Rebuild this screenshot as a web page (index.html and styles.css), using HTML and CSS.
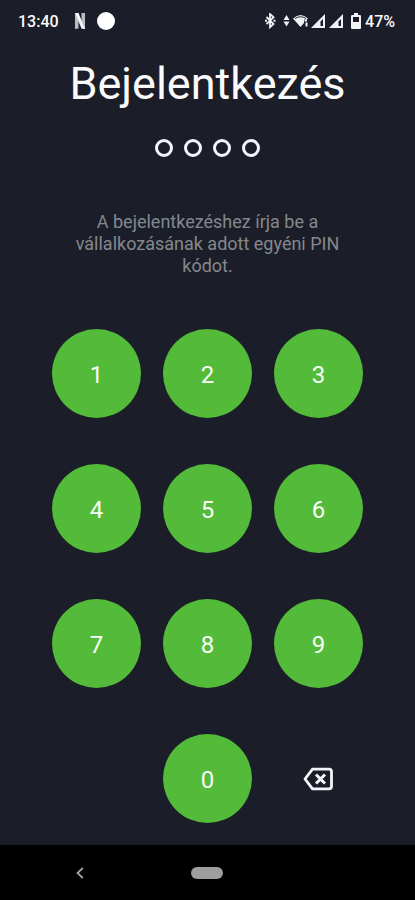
FILE: index.html
```html
<!DOCTYPE html>
<html lang="hu">
<head>
    <meta charset="UTF-8">
    <meta name="viewport" content="width=device-width, initial-scale=1.0">
    <title>Bejelentkezés</title>
    <link rel="stylesheet" href="styles.css">
</head>
<body>

<header class="status-bar">
    <div class="status-left">
        <span>13:40</span>
        <svg class="app-icon" width="10" height="16" viewBox="0 0 10 16">
            <path d="M0 0h3.500v15.500l-3.500 .5zM6.500 0H10v16l-3.500-.5z" fill="#b9bcc2"/>
            <path d="M0 0h3.500L10 16l-3.500-.5z" fill="#f4f5f7"/>
        </svg>
        <span class="notification-dot"></span>
    </div>
    <div class="status-right">
        <svg width="60" height="16" viewBox="0 0 60 16" fill="#f1f2f5">
            <!-- bluetooth -->
            <path d="M1.500 4l7 7L5 14.200V1l3.500 3.200-7 7" fill="none" stroke="#f1f2f5" stroke-width="1.800"/>
            <path d="M0 6.700h2v2H0zM8.500 6.700h2v2h-2z"/>
            <!-- adatforgalom -->
            <path d="M18.500 7l3-5 3 5zM18.500 8.500h6l-3 5z"/>
            <!-- wifi -->
            <path d="M28 5.500q7.500-7 15 0L35.500 14z"/>
            <path d="M30 5.500q5.500-3.500 11 0" fill="none" stroke="#1b1e28" stroke-width="1"/>
            <path d="M39 6.500h5V15h-5z" fill="#1b1e28"/>
            <path d="M39.500 6.500H42v2h-2.500zM40.500 9.500h2v4h-2z"/>
            <!-- térerő -->
            <path d="M46 15L60 1v14z"/>
            <path d="M55.500 8.500L58 6v7h-2.500z" fill="#1b1e28"/>
        </svg>
        <svg width="14" height="16" viewBox="0 0 14 16" fill="#f1f2f5">
            <path d="M0 15L14 1v14z"/>
            <path d="M9.500 8.500L12 6v7H9.500z" fill="#1b1e28"/>
        </svg>
        <svg class="battery" width="10" height="16" viewBox="0 0 10 16" fill="#f1f2f5">
            <path d="M3 0h4v2h2q1 0 1 1v12q0 1-1 1H1q-1 0-1-1V3q0-1 1-1h2z"/>
            <path d="M2 4h6v5H2z" fill="#1b1e28"/>
        </svg>
        <span>47%</span>
    </div>
</header>

<main class="login">
    <h1>Bejelentkezés</h1>
    <div class="pin-dots">
        <span class="dot"></span>
        <span class="dot"></span>
        <span class="dot"></span>
        <span class="dot"></span>
    </div>
    <p class="hint">A bejelentkezéshez írja be a vállalkozásának adott egyéni PIN kódot.</p>
    <div class="keypad">
        <button class="key" type="button">1</button>
        <button class="key" type="button">2</button>
        <button class="key" type="button">3</button>
        <button class="key" type="button">4</button>
        <button class="key" type="button">5</button>
        <button class="key" type="button">6</button>
        <button class="key" type="button">7</button>
        <button class="key" type="button">8</button>
        <button class="key" type="button">9</button>
        <button class="key key-zero" type="button">0</button>
        <button class="key key-delete" type="button" aria-label="Törlés">
            <svg width="32" height="24" viewBox="0 0 32 24" fill="none" stroke="#f4f5f8" stroke-width="2.800" stroke-linejoin="round">
                <path d="M9.500 2.200H26q2.500 0 2.500 2.500v14.600q0 2.500-2.500 2.500H9.500L2 12z"/>
                <path d="M13 7.500l9 9M22 7.500l-9 9" stroke-width="3"/>
            </svg>
        </button>
    </div>
</main>

<nav class="nav-bar">
    <button class="nav-button" type="button" aria-label="Vissza">
        <svg width="8" height="12" viewBox="0 0 8 12" fill="none" stroke="#a3a3a3" stroke-width="1.800">
            <path d="M6.800 1L1.500 6l5.300 5"/>
        </svg>
    </button>
    <button class="nav-button" type="button" aria-label="Kezdőképernyő">
        <span class="home-pill"></span>
    </button>
</nav>

</body>
</html>
```
FILE: styles.css
```css
* {
    box-sizing: border-box;
}

body {
    margin: 0;
    min-height: 100vh;
    display: flex;
    flex-direction: column;
    background-color: #1b1e28;
    color: #fafafc;
    font-family: Roboto, sans-serif;
}

/* Állapotsor */
.status-bar {
    display: flex;
    justify-content: space-between;
    align-items: center;
    height: 42px;
    padding: 0 20px 0 18px;
    font-size: 16px;
    font-weight: 500;
}

.status-left,
.status-right {
    display: flex;
    align-items: center;
}

.status-right {
    gap: 4px;
}

.app-icon {
    margin: 0 12px 0 16px;
}

.notification-dot {
    width: 18px;
    height: 18px;
    border-radius: 50%;
    background-color: #fff;
}

.battery {
    margin-left: 4px;
}

/* Bejelentkezés */
.login {
    flex: 1;
    display: flex;
    flex-direction: column;
    align-items: center;
    padding: 16px 52px 22px;
}

h1 {
    margin: 0;
    font-size: 45px;
    font-weight: 400;
    line-height: 52px;
}

.pin-dots {
    display: flex;
    gap: 11px;
    margin-top: 29px;
}

.dot {
    width: 18px;
    height: 18px;
    border: 3px solid #f4f5f8;
    border-radius: 50%;
}

.hint {
    max-width: 288px;
    margin: 54px 0 52px;
    color: #85878d;
    font-size: 18px;
    line-height: 22px;
    text-align: center;
}

.keypad {
    display: grid;
    grid-template-columns: repeat(3, 89px);
    gap: 46px 22px;
}

.key {
    display: flex;
    justify-content: center;
    align-items: center;
    height: 89px;
    padding: 2px 0 0;
    border: none;
    border-radius: 50%;
    background-color: #53bb39;
    color: #f7fdf5;
    font-family: inherit;
    font-size: 24px;
    cursor: pointer;
}

.key:active {
    background-color: #479f31;
}

.key-zero {
    grid-column: 2;
}

.key-delete,
.key-delete:active {
    padding: 0;
    background: none;
}

/* Navigációs sáv */
.nav-bar {
    display: grid;
    grid-template-columns: 5fr 3fr 5fr;
    align-items: center;
    height: 55px;
    background-color: #000;
}

.nav-button {
    display: flex;
    justify-content: center;
    padding: 8px 0;
    border: none;
    background: none;
    cursor: pointer;
}

.home-pill {
    width: 32px;
    height: 12px;
    border-radius: 6px;
    background-color: #9e9e9e;
}
```
